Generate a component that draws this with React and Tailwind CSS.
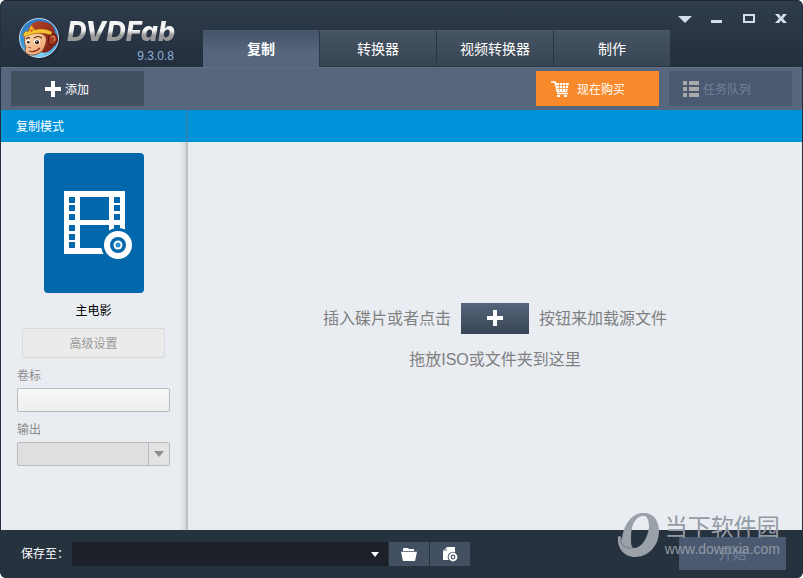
import React, { useState } from "react";

const TABS = ["复制", "转换器", "视频转换器", "制作"];

function MonkeyLogo() {
  return (
    <svg viewBox="0 0 44 44" className="h-11 w-11 shrink-0" aria-hidden="true">
      <defs>
        <radialGradient id="disc" cx="50%" cy="85%" r="85%">
          <stop offset="0" stopColor="#8fdcfc" />
          <stop offset="0.5" stopColor="#3d9fe0" />
          <stop offset="1" stopColor="#2a76bd" />
        </radialGradient>
        <linearGradient id="fur" x1="0" y1="0" x2="1" y2="1">
          <stop offset="0" stopColor="#b9452a" />
          <stop offset="1" stopColor="#741c13" />
        </linearGradient>
        <linearGradient id="skin" x1="0" y1="0" x2="1" y2="1">
          <stop offset="0" stopColor="#fde0b4" />
          <stop offset="1" stopColor="#e99a63" />
        </linearGradient>
      </defs>
      <circle cx="23.5" cy="23.5" r="20" fill="#17212e" opacity="0.5" />
      <circle cx="22" cy="22" r="19.5" fill="url(#disc)" stroke="#c4dcf0" strokeWidth="1" />
      <path
        d="M11 14C14 6 21 4 27 6C33 6 38 11 38 17C42 20 42 28 37 30C34 35 29 38 24 36L12 22Z"
        fill="url(#fur)"
      />
      <path d="M32 20C36 16 41 19 40 24C39 29 34 30 31 27Z" fill="#a33a24" stroke="#5d140d" strokeWidth="1" />
      <path d="M34 21C37 19 39 22 37 25" fill="none" stroke="#e08a58" strokeWidth="1.2" />
      <path
        d="M8 20C12 16 22 16 27 19C31 22 29 27 28 30C26 36 21 39 15 39C9 39 7 35 9 31C7 28 7 23 8 20Z"
        fill="url(#skin)"
        stroke="#7a2a18"
        strokeWidth="0.7"
      />
      <path
        d="M6 18L9 15L11 16L14 9L18 14C24 12 30 13 35 16L34 19C26 16 16 17 7 21Z"
        fill="#f6c432"
        stroke="#a85e12"
        strokeWidth="0.6"
      />
      <path d="M13 14L16 13L15 16Z" fill="#d9311f" />
      <path d="M9 23Q11 21 13 22M17 22Q21 19 25 22" fill="none" stroke="#4a160f" strokeWidth="1.2" />
      <ellipse cx="11" cy="26" rx="1.6" ry="2.4" fill="#fff" />
      <ellipse cx="20" cy="26" rx="3" ry="2.8" fill="#fff" />
      <circle cx="11.3" cy="26.2" r="1.2" fill="#2b1410" />
      <circle cx="20" cy="26.2" r="2" fill="#2b1410" />
      <circle cx="19.4" cy="25.6" r="0.6" fill="#fff" />
      <path d="M12 35Q18 37 23 32" fill="none" stroke="#8d2c1e" strokeWidth="1.2" />
      <path d="M11 31L14 32" stroke="#9b3424" strokeWidth="0.8" />
    </svg>
  );
}

function PlusIcon() {
  return (
    <svg viewBox="0 0 16 16" className="h-4 w-4" aria-hidden="true">
      <path d="M6 0H10V6H16V10H10V16H6V10H0V6H6Z" fill="#fff" />
    </svg>
  );
}

function CartIcon() {
  return (
    <svg viewBox="0 0 18 16" className="h-4 w-[18px]" aria-hidden="true">
      <path d="M0 1H4L7 12.5H17" fill="none" stroke="#fff" strokeWidth="1.6" />
      <path d="M5 2H18L16 11H7Z" fill="#fff" />
      <path d="M5 4.5H18M6 7.5H17M8.5 2V10M11.5 2V10M14.5 2V10" stroke="#f98a2b" strokeWidth="0.7" />
      <rect x="6" y="14" width="3" height="2" fill="#fff" />
      <rect x="13" y="14" width="3" height="2" fill="#fff" />
    </svg>
  );
}

function QueueIcon() {
  return (
    <svg viewBox="0 0 16 16" className="h-4 w-4" fill="#a9a9a9" aria-hidden="true">
      <path d="M0 0H4V4H0ZM6 0H16V4H6ZM0 6H4V10H0ZM6 6H16V10H6ZM0 12H4V16H0ZM6 12H16V16H6Z" />
    </svg>
  );
}

function MovieIcon() {
  return (
    <svg viewBox="0 0 70 70" className="h-[70px] w-[70px]" aria-hidden="true">
      <path d="M0 0H61V63H0Z" fill="#fff" />
      <g fill="#0268ab">
        <path d="M16 6H45V29H16ZM16 34H45V57H16Z" />
        <path d="M5 6H11V12H5ZM5 14H11V20H5ZM5 23H11V29H5ZM5 34H11V40H5ZM5 43H11V49H5ZM5 51H11V57H5Z" />
        <path d="M50 6H56V12H50ZM50 14H56V20H50ZM50 23H56V29H50ZM50 34H56V40H50Z" />
        <path d="M61 38H70V70H39V63H61Z" />
        <circle cx="54" cy="54" r="17" />
      </g>
      <circle cx="54" cy="54" r="14" fill="#fff" />
      <circle cx="54" cy="54" r="8" fill="#0268ab" />
      <circle cx="54" cy="54" r="4.5" fill="#fff" />
      <circle cx="54" cy="54" r="2.5" fill="#2b8fd6" />
    </svg>
  );
}

function WindowControls() {
  const btn = "flex h-4 w-8 items-center justify-center";
  const icon = "h-[14px] w-[14px]";
  return (
    <div className="flex pt-[10px] pr-[5px]">
      <button className={btn} aria-label="菜单">
        <svg viewBox="0 0 14 14" className={icon}>
          <path d="M0 4H14L7 11Z" fill="#d3deec" />
        </svg>
      </button>
      <button className={btn} aria-label="最小化">
        <svg viewBox="0 0 14 14" className={icon}>
          <path d="M1 8H12V11H1Z" fill="#d3deec" />
        </svg>
      </button>
      <button className={btn} aria-label="最大化">
        <svg viewBox="0 0 14 14" className={icon}>
          <path d="M2 3H12V10H2Z" fill="none" stroke="#d3deec" strokeWidth="2" />
        </svg>
      </button>
      <button className={btn} aria-label="关闭">
        <svg viewBox="0 0 14 14" className={icon}>
          <path d="M1 2H5L7 5L9 2H13L9 6.5L13 11H9L7 8.5L5 11H1L5 6.5Z" fill="#d3deec" />
        </svg>
      </button>
    </div>
  );
}

function Header({ active, onSelect }) {
  return (
    <header className="flex h-[67px] justify-between border-t border-[#1c2733] bg-linear-to-b from-[#2f3c4b] to-[#232f3f]">
      <div className="flex min-w-0">
        <div className="flex w-[202px] shrink-0 pt-[15px] pl-4">
          <MonkeyLogo />
          <div className="flex w-[126px] flex-col pl-[6px]">
            <span className="bg-linear-to-b from-[#f4f4f4] from-45% to-[#9a9a9a] to-60% bg-clip-text font-['Inter',sans-serif] text-[27px] leading-8 font-extrabold text-transparent italic">
              DVDFab
            </span>
            <span className="pr-[13px] text-right font-['Liberation_Sans',sans-serif] text-xs leading-4 text-[#8fb0d8]">
              9.3.0.8
            </span>
          </div>
        </div>
        <nav className="flex pt-[29px]">
          {TABS.map((tab) => (
            <button
              key={tab}
              onClick={() => onSelect(tab)}
              className={
                tab === active
                  ? "w-[116px] border-t border-[#4d5a6b] bg-linear-to-b from-[#46546a] to-[#57667c] to-60% text-sm font-bold text-white"
                  : "w-[117px] border-t border-b border-l border-t-[#4d5a68] border-b-[#2b3643] border-l-[#2b3643] bg-linear-to-b from-[#465362] to-[#384555] text-sm text-white"
              }
            >
              {tab}
            </button>
          ))}
        </nav>
      </div>
      <WindowControls />
    </header>
  );
}

function Toolbar() {
  return (
    <div className="flex h-[43px] items-start justify-between border-t border-[#626f82] bg-[#57667c] px-[10px] pt-[3px]">
      <button className="flex h-[35px] w-[133px] items-center gap-1 bg-[#435062] pl-[34px] text-xs text-white">
        <PlusIcon />
        <span className="pt-0.5">添加</span>
      </button>
      <div className="flex gap-[10px]">
        <button className="flex h-[35px] w-[123px] items-center gap-2 bg-[#f98a2b] pl-[15px] text-xs text-white">
          <CartIcon />
          <span className="pt-0.5">现在购买</span>
        </button>
        <button
          disabled
          className="flex h-[35px] w-[123px] items-center gap-1 bg-[#4a5970] pl-[14px] text-xs text-[#72809a]"
        >
          <QueueIcon />
          <span className="pt-0.5">任务队列</span>
        </button>
      </div>
    </div>
  );
}

function Sidebar() {
  return (
    <aside className="flex w-[187px] shrink-0 flex-col border-r-2 border-[#bcbec1] bg-linear-to-r from-[#e9edf2] from-96% to-[#d5d8dc] px-4 pt-[11px]">
      <button className="mx-auto flex flex-col items-center text-xs text-black">
        <span className="mb-2 flex h-[140px] w-[100px] items-center justify-center rounded bg-[#0268ab] pt-[6px] pl-[10px]">
          <MovieIcon />
        </span>
        <span className="leading-5">主电影</span>
      </button>
      <button
        disabled
        className="mx-[5px] mt-[7px] h-[30px] rounded-xs border border-[#d8dadc] bg-[#ebebeb] pt-0.5 text-xs text-[#9a9a9a]"
      >
        高级设置
      </button>
      <label htmlFor="volume" className="mt-2 text-xs leading-5 text-[#8c8c8c]">
        卷标
      </label>
      <input
        id="volume"
        type="text"
        className="mt-0.5 h-6 rounded-xs border border-[#b8babd] bg-linear-to-b from-[#f8f8f8] to-[#eeeeee] px-2 text-xs"
      />
      <label htmlFor="output" className="mt-2 text-xs leading-5 text-[#8c8c8c]">
        输出
      </label>
      <div className="mt-0.5 grid h-6">
        <select
          id="output"
          disabled
          className="col-start-1 row-start-1 appearance-none rounded-xs border border-[#b8babd] bg-[#dfdfdf] px-2 text-xs"
        />
        <span className="pointer-events-none col-start-1 row-start-1 my-px mr-px flex w-[21px] items-center justify-center justify-self-end border-l border-[#b8babd] bg-[#e3e3e3]">
          <svg viewBox="0 0 10 6" className="h-[6px] w-[10px]">
            <path d="M0 0H10L5 6Z" fill="#8e8e8e" />
          </svg>
        </span>
      </div>
    </aside>
  );
}

function DropArea() {
  return (
    <section className="flex flex-1 flex-col items-center justify-center bg-[#e9edf2] pt-1 text-base text-[#808080]">
      <div className="flex items-center gap-[10px]">
        <span className="pt-0.5">插入碟片或者点击</span>
        <button
          aria-label="添加"
          className="flex h-[31px] w-[68px] items-center justify-center bg-linear-to-b from-[#56657b] to-[#394554]"
        >
          <PlusIcon />
        </button>
        <span className="pt-0.5">按钮来加载源文件</span>
      </div>
      <p className="mt-3 leading-7">拖放ISO或文件夹到这里</p>
    </section>
  );
}

function Footer() {
  const iconBtn = "flex h-6 w-10 items-center justify-center bg-[#435062]";
  return (
    <footer className="flex h-12 justify-between rounded-b-sm bg-[#27323f] pr-4 pl-5 text-xs text-white">
      <div className="flex min-w-0 items-center">
        <label htmlFor="saveTo" className="w-[51px] shrink-0 whitespace-nowrap">
          保存至：
        </label>
        <div className="grid h-6 w-[316px]">
          <select
            id="saveTo"
            className="col-start-1 row-start-1 appearance-none bg-[#1c2129] px-2 text-xs text-white"
          />
          <svg
            viewBox="0 0 8 5"
            className="pointer-events-none col-start-1 row-start-1 mr-[9px] h-[5px] w-2 self-center justify-self-end"
          >
            <path d="M0 0H8L4 5Z" fill="#fff" />
          </svg>
        </div>
        <div className="ml-px flex gap-px">
          <button className={iconBtn} aria-label="打开文件夹">
            <svg viewBox="0 0 16 14" className="h-[14px] w-4" fill="#fff">
              <path d="M2 4V1.5L3 1H7L8 2H13V4Z" />
              <path d="M0 4.7H16L14 14H2Z" />
            </svg>
          </button>
          <button className={iconBtn} aria-label="光盘映像文件">
            <svg viewBox="0 0 16 16" className="h-4 w-4">
              <path d="M5 1H13V14H1V5Z" fill="#fff" />
              <path d="M1 5H5V1Z" fill="#aab2bd" />
              <circle cx="11" cy="11" r="5.3" fill="#435062" />
              <circle cx="11" cy="11" r="3.4" fill="none" stroke="#fff" strokeWidth="2" />
              <circle cx="11" cy="11" r="1.2" fill="#fff" />
            </svg>
          </button>
        </div>
      </div>
      <button disabled className="mt-[7px] h-[33px] w-[107px] bg-[#4a5970] text-sm text-[#72809a]">
        开始
      </button>
    </footer>
  );
}

function Watermark() {
  return (
    <div className="pointer-events-none absolute right-[22px] bottom-5 flex items-center gap-1 text-[#929aa3]">
      <svg viewBox="0 0 44 46" className="h-[46px] w-11">
        <path
          fillRule="evenodd"
          d="M25 1C35 0 42 7 42 19C42 34 31 45 18 45C7 45 0 36 1 25C3 22 5 26 5 29C5 18 12 2 25 1ZM25 4C18 5 14 14 14 25C14 31 14 34 16 36C24 37 31 26 32 15C32 8 30 3 25 4Z"
          fill="#9aa1a9"
        />
        <path d="M3 26C4 34 9 37 17 36" fill="none" stroke="#6f7883" strokeWidth="1" />
      </svg>
      <div className="flex flex-col">
        <span className="text-[23px] leading-7">当下软件园</span>
        <span className="font-['Liberation_Sans',sans-serif] text-sm leading-4">www.downxia.com</span>
      </div>
    </div>
  );
}

export default function App() {
  const [active, setActive] = useState("复制");

  return (
    <div className="relative flex min-h-screen flex-col overflow-hidden rounded-md border-x border-[#232f3f] bg-[#27323f] font-['Liberation_Sans','Noto_Sans_CJK_SC',sans-serif]">
      <Header active={active} onSelect={setActive} />
      <Toolbar />
      <div className="flex h-8 bg-[#0093d9] text-xs text-white">
        <h2 className="flex w-[187px] items-center border-r-2 border-[#2a83b5] pt-0.5 pl-[15px]">复制模式</h2>
      </div>
      <main className="flex flex-1">
        <Sidebar />
        <DropArea />
      </main>
      <Footer />
      <Watermark />
    </div>
  );
}
